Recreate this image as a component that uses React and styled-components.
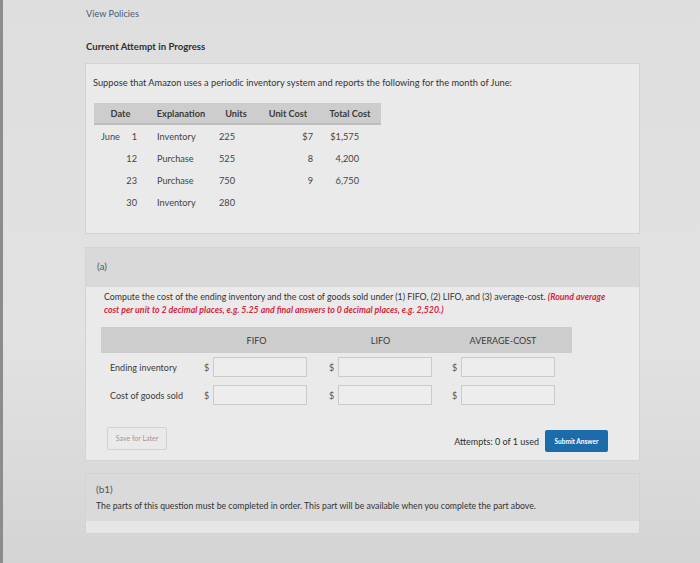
import React from 'react'
import styled, { createGlobalStyle } from 'styled-components'

const GlobalStyle = createGlobalStyle`
  html, body {
    margin: 0;
    padding: 0;
  }
  body {
    background: linear-gradient(180deg, #dedede 0%, #e2e2e2 60%, #d4d4d4 100%);
    border-left: 3px solid #8c8c8c;
    min-height: 563px;
    font-family: Lato, "Open Sans", sans-serif;
    color: #3a3a3a;
  }
`

const rows = [
  { month: 'June', day: '1', what: 'Inventory', units: '225', unit: '$7', total: '$1,575' },
  { day: '12', what: 'Purchase', units: '525', unit: '8', total: '4,200' },
  { day: '23', what: 'Purchase', units: '750', unit: '9', total: '6,750' },
  { day: '30', what: 'Inventory', units: '280', unit: '', total: '' },
]

const methods = ['FIFO', 'LIFO', 'AVERAGE-COST']

const App = () => {
  return (
    <Page>
      <GlobalStyle />
      <PolicyLink>View Policies</PolicyLink>
      <AttemptTitle>Current Attempt in Progress</AttemptTitle>

      <Panel>
        <QuestionBody>
          <Prompt>Suppose that Amazon uses a periodic inventory system and reports the following for the month of June:</Prompt>
          <DataTable>
            <HeadCell>Date</HeadCell>
            <HeadCell>Explanation</HeadCell>
            <HeadCell>Units</HeadCell>
            <HeadCell>Unit Cost</HeadCell>
            <HeadCell>Total Cost</HeadCell>
            {rows.map((r) => (
              <React.Fragment key={r.day}>
                <DateCell>
                  <span>{r.month}</span>
                  <span>{r.day}</span>
                </DateCell>
                <Cell $pad="0 0 0 10px">{r.what}</Cell>
                <Cell $pad="0 0 0 4px">{r.units}</Cell>
                <Cell $right $pad="0 6px 0 0">{r.unit}</Cell>
                <Cell $right $pad="0 22px 0 0">{r.total}</Cell>
              </React.Fragment>
            ))}
          </DataTable>
        </QuestionBody>
      </Panel>

      <Panel $gap="13px">
        <PartBand>
          <PartLabel>(a)</PartLabel>
        </PartBand>
        <PartBody>
          <Instructions>
            Compute the cost of the ending inventory and the cost of goods sold under (1) FIFO, (2) LIFO, and (3) average-cost.{' '}
            <Hint>(Round average cost per unit to 2 decimal places, e.g. 5.25 and final answers to 0 decimal places, e.g. 2,520.)</Hint>
          </Instructions>

          <AnswerGrid>
            <AnswerHead />
            {methods.map((m) => (
              <AnswerHead key={m} $center>{m}</AnswerHead>
            ))}
            {['Ending inventory', 'Cost of goods sold'].map((label) => (
              <React.Fragment key={label}>
                <RowLabel>{label}</RowLabel>
                {methods.map((m) => (
                  <InputGroup key={m}>
                    <Dollar>$</Dollar>
                    <AnswerInput />
                  </InputGroup>
                ))}
              </React.Fragment>
            ))}
          </AnswerGrid>

          <ActionRow>
            <SaveButton>Save for Later</SaveButton>
            <SubmitArea>
              <Attempts>Attempts: 0 of 1 used</Attempts>
              <SubmitButton>Submit Answer</SubmitButton>
            </SubmitArea>
          </ActionRow>
        </PartBody>
      </Panel>

      <Panel $gap="12px">
        <LockedBand>
          <PartLabel>(b1)</PartLabel>
          <LockedText>The parts of this question must be completed in order. This part will be available when you complete the part above.</LockedText>
        </LockedBand>
        <LockedFoot />
      </Panel>
    </Page>
  )
}

const Page = styled.div`
  width: 555px;
  padding: 8px 0 0 82px;
`

const PolicyLink = styled.div`
  font-size: 9.2px;
  line-height: 12px;
  color: #4d5b78;
  margin-left: 1px;
`

const AttemptTitle = styled.div`
  margin-top: 21px;
  font-size: 9.6px;
  line-height: 12px;
  font-weight: 700;
  color: #2f2f2f;
  margin-left: 1px;
`

const Panel = styled.div`
  margin-top: ${(p) => p.$gap || '10px'};
  background: #eaeaea;
  border: 1px solid #d3d3d3;
`

const QuestionBody = styled.div`
  padding: 13px 8px 20px 8px;
`

const Prompt = styled.div`
  font-size: 9.25px;
  line-height: 12px;
  color: #333;
  margin-left: -1px;
`

const DataTable = styled.div`
  margin-top: 14px;
  display: grid;
  grid-template-columns: 53px 68px 42px 62px 62px;
  grid-auto-rows: 22px;
  width: 287px;
  font-size: 9.2px;
  color: #444;
`

const HeadCell = styled.div`
  display: flex;
  align-items: center;
  justify-content: center;
  background: #cdcdcd;
  border-bottom: 2px solid #bdbdbd;
  font-weight: 700;
  color: #3a3a3a;
`

const Cell = styled.div`
  display: flex;
  align-items: center;
  justify-content: ${(p) => (p.$right ? 'flex-end' : 'flex-start')};
  padding: ${(p) => p.$pad};
`

const DateCell = styled.div`
  display: flex;
  align-items: center;
  justify-content: space-between;
  padding: 0 10px 0 7px;
`

const PartBand = styled.div`
  background: #d9d9d9;
  padding: 11px 11px 14px;
`

const PartLabel = styled.div`
  font-size: 10px;
  line-height: 14px;
  color: #555;
`

const PartBody = styled.div`
  padding: 3px 31px 8px 15px;
`

const Instructions = styled.div`
  width: 512px;
  font-size: 8.8px;
  line-height: 13px;
  color: #333;
  padding-left: 3px;
`

const Hint = styled.span`
  color: #d3283f;
  font-style: italic;
  font-weight: 700;
`

const AnswerGrid = styled.div`
  margin-top: 11px;
  display: grid;
  grid-template-columns: 101px 125px 123px 122px;
  grid-template-rows: 26px 28px 28px;
  width: 471px;
`

const AnswerHead = styled.div`
  background: #cdcdcd;
  display: flex;
  align-items: center;
  justify-content: ${(p) => (p.$center ? 'center' : 'flex-start')};
  padding-right: ${(p) => (p.$center ? '16px' : '0')};
  font-size: 9px;
  color: #3a3a3a;
`

const RowLabel = styled.div`
  display: flex;
  align-items: center;
  padding-left: 9px;
  font-size: 9px;
  color: #3a3a3a;
`

const InputGroup = styled.div`
  display: flex;
  align-items: center;
  gap: 3px;
  padding-left: 2px;
`

const Dollar = styled.span`
  width: 6px;
  font-size: 9px;
  color: #555;
`

const AnswerInput = styled.div`
  width: 94px;
  height: 20px;
  box-sizing: border-box;
  border: 1px solid #cbcbcb;
  background: #ededed;
`

const ActionRow = styled.div`
  margin-top: 15px;
  display: flex;
  align-items: center;
  justify-content: space-between;
  padding-left: 6px;
`

const SaveButton = styled.div`
  width: 60px;
  height: 23px;
  box-sizing: border-box;
  border: 1px solid #d2d2d2;
  border-radius: 2px;
  display: flex;
  align-items: center;
  justify-content: center;
  font-size: 7px;
  color: #999;
`

const SubmitArea = styled.div`
  display: flex;
  align-items: center;
  gap: 6px;
  margin-top: 6px;
`

const Attempts = styled.span`
  font-size: 9px;
  color: #2f2f2f;
`

const SubmitButton = styled.div`
  width: 63px;
  height: 22px;
  border-radius: 2px;
  background: #1c6bab;
  color: #fff;
  display: flex;
  align-items: center;
  justify-content: center;
  font-size: 6.5px;
  font-weight: 700;
`

const LockedBand = styled.div`
  background: #dadada;
  padding: 8px 10px 9px;
  display: flex;
  flex-direction: column;
  gap: 4px;
`

const LockedText = styled.div`
  font-size: 8.7px;
  line-height: 12px;
  color: #333;
`

const LockedFoot = styled.div`
  height: 12px;
  background: #e6e6e6;
`

export default App
